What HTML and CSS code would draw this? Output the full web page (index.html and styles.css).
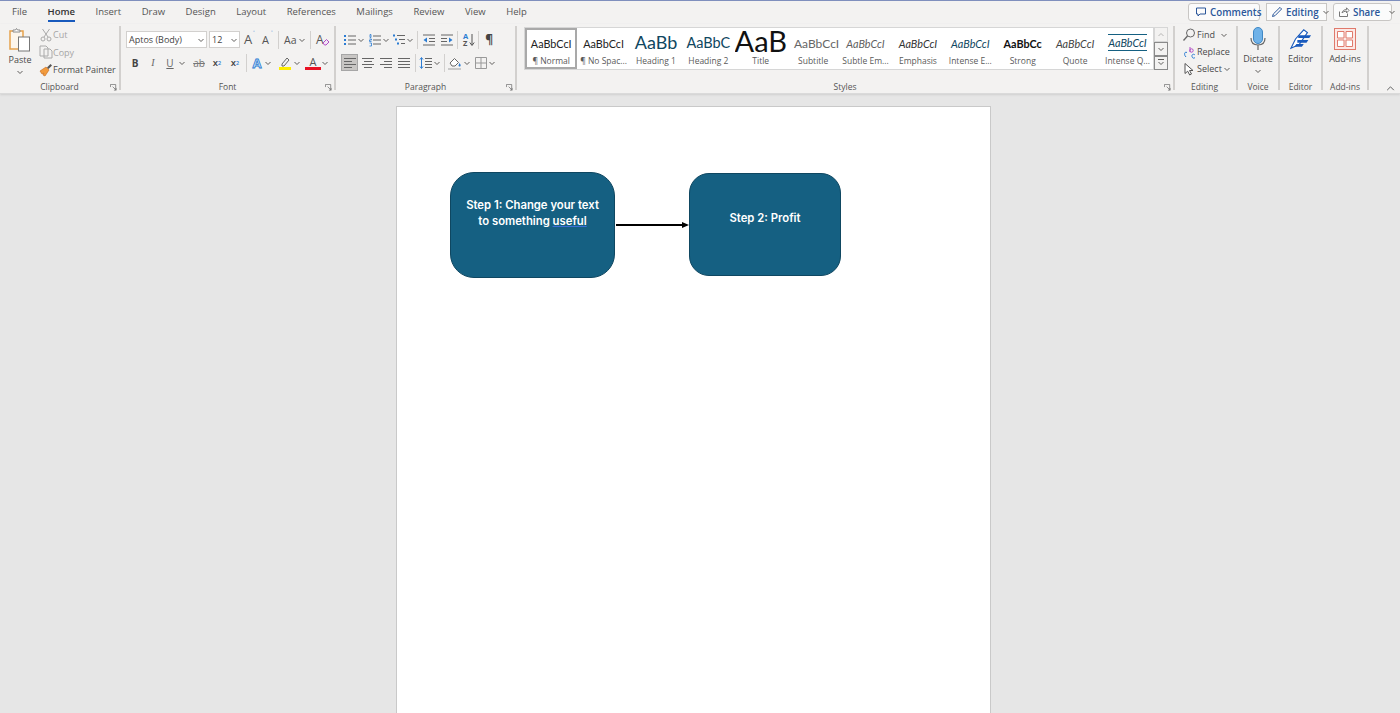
FILE: index.html
```html
<!DOCTYPE html>
<html lang="en">
<head>
<meta charset="utf-8">
<title>Document - Word</title>
<link rel="stylesheet" href="styles.css">
</head>
<body>
<svg class="defs" aria-hidden="true">
  <symbol id="ch" viewBox="0 0 8 8"><path d="M1.5 3 4 5.5 6.5 3" fill="none" stroke="#605e5c" stroke-width="1"/></symbol>
  <symbol id="launch" viewBox="0 0 8 8"><path d="M.5 .5h6v6M.5 .5v3M.5 .5M3 3l4 4M7 4.5V7H4.5" fill="none" stroke="#777" stroke-width=".9"/></symbol>
</svg>
<div class="app">
  <header class="tabbar">
    <nav class="tabs">
      <span class="tab">File</span>
      <span class="tab active">Home</span>
      <span class="tab">Insert</span>
      <span class="tab">Draw</span>
      <span class="tab">Design</span>
      <span class="tab">Layout</span>
      <span class="tab">References</span>
      <span class="tab">Mailings</span>
      <span class="tab">Review</span>
      <span class="tab">View</span>
      <span class="tab">Help</span>
    </nav>
    <div class="actions">
      <span class="act w-comments"><svg class="i12" viewBox="0 0 12 12"><path d="M1.5 2h9v6H5L3 10V8H1.5z" fill="none" stroke="#2b579a"/></svg>Comments</span>
      <span class="act w-editing"><svg class="i12" viewBox="0 0 12 12"><path d="M1.5 10.5 2.3 8 9 1.4l1.6 1.6L4 9.7z" fill="none" stroke="#2b579a"/></svg>Editing<svg class="chev" viewBox="0 0 8 8"><use href="#ch"/></svg></span>
      <span class="act w-share"><svg class="i12" viewBox="0 0 12 12"><path d="M1.5 5.5v5h8v-3M4 7c.4-2.2 2-3.4 4.5-3.4V1.8L11 4.4 8.5 7V5.2C6.500 5.200 5 5.800 4 7z" fill="none" stroke="#777"/></svg>Share<svg class="chev gap-share" viewBox="0 0 8 8"><use href="#ch"/></svg></span>
    </div>
  </header>

  <section class="ribbon">
    <div class="group g-clip">
      <div class="gbody clip-body">
        <div class="big paste">
          <svg class="i-paste" viewBox="0 0 22 24">
            <rect x="1" y="3" width="13" height="18" fill="#fdf6ec" stroke="#e6a24c" stroke-width="1.500"/>
            <path d="M4 4V2h2.500l1-1.500 1 1.500H11v2z" fill="#fff" stroke="#8a8a8a"/>
            <rect x="9.500" y="9" width="11" height="14" fill="#fff" stroke="#777"/>
          </svg>
          <span>Paste</span>
          <svg class="chev" viewBox="0 0 8 8"><use href="#ch"/></svg>
        </div>
        <div class="clip-list">
          <div class="clip-row off"><svg class="i14" viewBox="0 0 14 14"><path d="M3.500 1 9 9M10.500 1 5 9" fill="none" stroke="#aaa"/><circle cx="4" cy="11" r="2" fill="none" stroke="#aaa"/><circle cx="10" cy="11" r="2" fill="none" stroke="#aaa"/></svg>Cut</div>
          <div class="clip-row off"><svg class="i14" viewBox="0 0 14 14"><path d="M1 1h6l2 2v8H1zM5 4h6l2 2v7H5z" fill="#f3f2f1" stroke="#aaa"/></svg>Copy</div>
          <div class="clip-row"><svg class="i14" viewBox="0 0 14 14"><path d="M1 8 7 4l3 3-4 6-2-1 1-2-2 1z" fill="#f29b3d" stroke="#c4661a" stroke-width=".6"/><path d="M8 4.500 11.500 1 13 2.500 9.500 6z" fill="#555"/></svg>Format Painter</div>
        </div>
      </div>
      <div class="glabel">Clipboard</div>
      <svg class="launcher" viewBox="0 0 8 8"><use href="#launch"/></svg>
    </div>

    <div class="group g-font">
      <div class="gbody rows">
        <div class="row">
          <span class="combo w-face">Aptos (Body)<svg class="chev" viewBox="0 0 8 8"><use href="#ch"/></svg></span>
          <span class="combo w-size">12<svg class="chev" viewBox="0 0 8 8"><use href="#ch"/></svg></span>
          <span class="glyph grow-a">A<sup class="up">&#708;</sup></span>
          <span class="glyph shrink-a">A<sup class="down">&#709;</sup></span>
          <i class="vsep s-a"></i>
          <span class="glyph case-a">Aa</span><svg class="chev" viewBox="0 0 8 8"><use href="#ch"/></svg>
          <i class="vsep s-b"></i>
          <span class="glyph clear-a">A<svg class="eraser" viewBox="0 0 8 8"><path d="M1 5 4.500 1.500 7 4 4 7H2.500z" fill="#f3e6f7" stroke="#b14fc5"/></svg></span>
        </div>
        <div class="row fmt">
          <span class="cell t-b">B</span>
          <span class="cell t-i">I</span>
          <span class="cell n16 t-u">U</span><svg class="chev" viewBox="0 0 8 8"><use href="#ch"/></svg>
          <span class="cell t-s ml4">ab</span>
          <span class="cell t-x">x<sub>2</sub></span>
          <span class="cell t-x">x<sup>2</sup></span>
          <i class="vsep ml2"></i>
          <span class="cell n16 t-fx ml2">A</span><svg class="chev nudge" viewBox="0 0 8 8"><use href="#ch"/></svg>
          <span class="cell n16 ml5"><svg class="i16" viewBox="0 0 16 16"><path d="M5 9 10 3l2 2-5 6H5z" fill="none" stroke="#666"/><rect x="2" y="12" width="12" height="3" fill="#ffee00"/></svg></span><svg class="chev" viewBox="0 0 8 8"><use href="#ch"/></svg>
          <span class="cell n16 ml4 colour-a">A</span><svg class="chev" viewBox="0 0 8 8"><use href="#ch"/></svg>
        </div>
      </div>
      <div class="glabel">Font</div>
      <svg class="launcher" viewBox="0 0 8 8"><use href="#launch"/></svg>
    </div>

    <div class="group g-para">
      <div class="gbody rows">
        <div class="row para-top">
          <svg class="i14" viewBox="0 0 14 14"><path d="M5 3h8M5 7h8M5 11h8" stroke="#666"/><path d="M1 2h2v2H1zM1 6h2v2H1zM1 10h2v2H1z" fill="#2b7cd3"/></svg><svg class="chev" viewBox="0 0 8 8"><use href="#ch"/></svg>
          <svg class="i14 ml3" viewBox="0 0 14 14"><path d="M5 3h8M5 7h8M5 11h8" stroke="#666"/><path d="M2 1.500h1v3H2zM1.500 6h2v1h-2v1.500h2M1.500 10h2v3h-2" fill="none" stroke="#2b7cd3" stroke-width=".8"/></svg><svg class="chev" viewBox="0 0 8 8"><use href="#ch"/></svg>
          <svg class="i14 ml2" viewBox="0 0 14 14"><path d="M5 2.500h8M7 6.500h6M9 10.500h4" stroke="#666"/><path d="M1 1.500h2v2H1zM3 5.500h2v2H3zM5 9.500h2v2H5z" fill="#2b7cd3"/></svg><svg class="chev" viewBox="0 0 8 8"><use href="#ch"/></svg>
          <i class="vsep ml3"></i>
          <svg class="i14 ml4" viewBox="0 0 14 14"><path d="M1 2h12M7 5.500h6M7 8.500h6M1 12h12" stroke="#666"/><path d="M5 4.500v5L1.500 7z" fill="#2b7cd3"/></svg>
          <svg class="i14 ml4" viewBox="0 0 14 14"><path d="M1 2h12M1 5.500h6M1 8.500h6M1 12h12" stroke="#666"/><path d="M9 4.500v5L12.500 7z" fill="#2b7cd3"/></svg>
          <i class="vsep ml3"></i>
          <span class="sort"><span class="az"><b>A</b><b>Z</b></span><svg class="i-arrow" viewBox="0 0 6 14"><path d="M3 1v11M.8 9.500 3 12.500l2.200-3" fill="none" stroke="#555"/></svg></span>
          <i class="vsep ml3"></i>
          <span class="pilcrow">&para;</span>
        </div>
        <div class="row para-bottom">
          <span class="al on"><svg class="i14" viewBox="0 0 14 14"><path d="M1 2.500h12M1 5.500h8M1 8.500h12M1 11.500h8" stroke="#666"/></svg></span>
          <span class="al"><svg class="i14" viewBox="0 0 14 14"><path d="M1 2.500h12M3 5.500h8M1 8.500h12M3 11.500h8" stroke="#666"/></svg></span>
          <span class="al"><svg class="i14" viewBox="0 0 14 14"><path d="M1 2.500h12M5 5.500h8M1 8.500h12M5 11.500h8" stroke="#666"/></svg></span>
          <span class="al"><svg class="i14" viewBox="0 0 14 14"><path d="M1 2.500h12M1 5.500h12M1 8.500h12M1 11.500h12" stroke="#666"/></svg></span>
          <i class="vsep ml2"></i>
          <svg class="i14 ml3" viewBox="0 0 14 14"><path d="M6 2.500h7M6 5.500h7M6 8.500h7M6 11.500h7" stroke="#666"/><path d="M2.500 2v10M1 3.500 2.500 1.500 4 3.500M1 10.500l1.500 2 1.500-2" fill="none" stroke="#2b7cd3"/></svg><svg class="chev" viewBox="0 0 8 8"><use href="#ch"/></svg>
          <i class="vsep ml3"></i>
          <svg class="i14 ml3" viewBox="0 0 14 14"><path d="M2 7 6.500 2.500 10.500 6.500 7 10H4z" fill="#fff" stroke="#666"/><path d="M11.500 7c1 1.500 1.500 2 1 3s-2 .5-2-.5z" fill="#2b7cd3"/><path d="M0 13h13" stroke="#bbb" stroke-width="1.500"/></svg><svg class="chev ml1" viewBox="0 0 8 8"><use href="#ch"/></svg>
          <svg class="i14 ml3" viewBox="0 0 14 14"><path d="M1.500 1.500h11v11h-11zM7 1.500v11M1.500 7h11" fill="none" stroke="#999"/></svg><svg class="chev" viewBox="0 0 8 8"><use href="#ch"/></svg>
        </div>
      </div>
      <div class="glabel">Paragraph</div>
      <svg class="launcher" viewBox="0 0 8 8"><use href="#launch"/></svg>
    </div>

    <div class="group g-styles">
      <div class="gbody styles-body">
        <div class="gallery">
          <div class="style selected"><div class="pv p-normal">AaBbCcI</div><div class="sl">&para; Normal</div></div>
          <div class="style"><div class="pv p-normal">AaBbCcI</div><div class="sl">&para; No Spac...</div></div>
          <div class="style"><div class="pv p-h1">AaBb</div><div class="sl">Heading 1</div></div>
          <div class="style"><div class="pv p-h2">AaBbC</div><div class="sl">Heading 2</div></div>
          <div class="style"><div class="pv p-title">AaB</div><div class="sl">Title</div></div>
          <div class="style"><div class="pv p-sub">AaBbCcI</div><div class="sl">Subtitle</div></div>
          <div class="style"><div class="pv p-sem">AaBbCcI</div><div class="sl">Subtle Em...</div></div>
          <div class="style"><div class="pv p-em">AaBbCcI</div><div class="sl">Emphasis</div></div>
          <div class="style"><div class="pv p-int">AaBbCcI</div><div class="sl">Intense E...</div></div>
          <div class="style"><div class="pv p-strong">AaBbCc</div><div class="sl">Strong</div></div>
          <div class="style"><div class="pv p-quote">AaBbCcI</div><div class="sl">Quote</div></div>
          <div class="style"><div class="pv p-iq"><span>AaBbCcI</span></div><div class="sl">Intense Q...</div></div>
        </div>
        <div class="scroller">
          <span class="sb"><svg class="chev flip faint" viewBox="0 0 8 8"><use href="#ch"/></svg></span>
          <span class="sb edge"><svg class="chev" viewBox="0 0 8 8"><use href="#ch"/></svg></span>
          <span class="sb edge more"><svg class="chev" viewBox="0 0 8 8"><use href="#ch"/></svg></span>
        </div>
      </div>
      <div class="glabel">Styles</div>
      <svg class="launcher" viewBox="0 0 8 8"><use href="#launch"/></svg>
    </div>

    <div class="group g-edit">
      <div class="gbody edit-list">
        <div class="edit-row"><svg class="i14" viewBox="0 0 14 14"><circle cx="8.500" cy="5" r="4" fill="none" stroke="#666"/><path d="M5.500 8 1.500 12.500" stroke="#666" stroke-width="1.300"/></svg>Find<svg class="chev find-ch" viewBox="0 0 8 8"><use href="#ch"/></svg></div>
        <div class="edit-row"><svg class="i14" viewBox="0 0 14 14"><path d="M5 7.500C2 6 2 10.500 4 12" fill="none" stroke="#2b7cd3"/><path d="M8 2v5" stroke="#b14fc5"/><circle cx="9.500" cy="5.500" r="1.700" fill="none" stroke="#b14fc5"/><path d="M13 10c-1.500-1.500-3.500-.5-3 1.500s2 2 3 1" fill="none" stroke="#2b7cd3"/></svg>Replace</div>
        <div class="edit-row"><svg class="i14" viewBox="0 0 14 14"><path d="M3 1.500v10l2.700-2.300 2 3.800 1.800-1-2-3.500H11z" fill="#fff" stroke="#555"/></svg>Select<svg class="chev" viewBox="0 0 8 8"><use href="#ch"/></svg></div>
      </div>
      <div class="glabel">Editing</div>
    </div>

    <div class="group g-voice">
      <div class="gbody big">
        <svg class="i-big" viewBox="0 0 22 24"><rect x="6.500" y="0.500" width="9" height="16" rx="4.500" fill="#6fb2e8" stroke="#3f88c5"/><path d="M4 11c0 5 3 7 7 7s7-2 7-7M11 18v5" fill="none" stroke="#666" stroke-width="1.200"/></svg>
        <span>Dictate</span>
        <svg class="chev" viewBox="0 0 8 8"><use href="#ch"/></svg>
      </div>
      <div class="glabel">Voice</div>
    </div>

    <div class="group g-editor">
      <div class="gbody big">
        <svg class="i-big" viewBox="0 0 24 24"><path d="M1 22 6 12 15 2l4 3-9 13z" fill="#fff" stroke="#185abd" stroke-width="1.200"/><path d="M9 8h14l-2 3H9zM8 13h12l-2 3H8zM7 17.500h8l-2 3H5z" fill="#185abd"/></svg>
        <span>Editor</span>
      </div>
      <div class="glabel">Editor</div>
    </div>

    <div class="group g-addins">
      <div class="gbody big">
        <svg class="i-big" viewBox="0 0 22 22"><rect x=".5" y=".5" width="21" height="21" fill="#fbe9e6"/><path d="M3.500 3.500h6.500v6.500H3.500zM12 3.500h6.500v6.500H12zM3.500 12h6.500v6.500H3.500zM12 12h6.500v6.500H12z" fill="#fff" stroke="#e0796b"/><rect x=".5" y=".5" width="21" height="21" fill="none" stroke="#e0796b"/></svg>
        <span>Add-ins</span>
      </div>
      <div class="glabel">Add-ins</div>
    </div>

    <svg class="collapse" viewBox="0 0 10 6"><path d="M1 5 5 1l4 4" fill="none" stroke="#555" stroke-width="1.100"/></svg>
  </section>

  <main class="workspace">
    <article class="page">
      <div class="node node-a"><p>Step 1: Change your text to something <span class="flag">useful</span></p></div>
      <svg class="arrow" viewBox="0 0 73 10"><path d="M0 5h67" stroke="#000" stroke-width="2"/><path d="M66 2l7 3-7 3z" fill="#000"/></svg>
      <div class="node node-b"><p>Step 2: Profit</p></div>
    </article>
  </main>
</div>
</body>
</html>
```

FILE: styles.css
```css
* { box-sizing: border-box; }
html, body { margin: 0; height: 100%; overflow: hidden; }
body { font-family: "Open Sans", "Noto Sans", sans-serif; font-size: 9px; color: #4a4a4a; background: #e6e6e6; }
.defs { display: none; }
.app { height: 713px; display: flex; flex-direction: column; }
svg { display: block; flex: none; }
.chev { width: 8px; height: 8px; }
.i12 { width: 12px; height: 12px; }
.i14 { width: 14px; height: 14px; }
.i16 { width: 16px; height: 16px; }

/* tab row */
.tabbar { height: 24px; flex: none; background: #f3f2f1; border-top: 1px solid #7f8fbd; display: flex; justify-content: space-between; }
.tabs { display: flex; gap: 20.500px; padding-left: 12px; }
.tab { height: 21px; line-height: 21px; font-size: 9.500px; color: #555; }
.tab.active { color: #333; font-weight: 600; border-bottom: 2px solid #185abd; }
.actions { display: flex; gap: 6px; padding: 2px 8px 0 0; }
.act { height: 18px; display: flex; align-items: center; gap: 3px; padding-left: 4px; background: #fbfbfb; border: 1px solid #c8c6c4; border-radius: 3px; color: #2b579a; font-size: 9.800px; font-weight: 600; }
.w-comments { width: 72px; padding-left: 6px; }
.w-editing { width: 61px; border-radius: 0; }
.w-share { width: 59px; }
.gap-share { margin-left: 5px; }

/* ribbon */
.ribbon { height: 70px; flex: none; background: #f3f2f1; display: flex; padding-top: 2px; border-bottom: 1px solid #dadada; box-shadow: 0 1px 2px #cfcfcf; position: relative; }
.group { height: 64px; display: flex; flex-direction: column; border-right: 2px solid #d2d0ce; position: relative; flex: none; }
.gbody { flex: 1; min-height: 0; }
.glabel { height: 10px; margin-bottom: -2px; line-height: 10px; text-align: center; font-size: 8.500px; color: #555; }
.launcher { position: absolute; right: 2px; bottom: -1px; width: 7px; height: 7px; }
.g-clip { width: 121px; }
.g-font { width: 215px; }
.g-para { width: 181px; }
.g-styles { width: 658px; }
.g-edit { width: 63px; }
.g-voice { width: 42px; }
.g-editor { width: 43px; }
.g-addins { width: 46px; }
.collapse { position: absolute; left: 1386px; top: 62px; width: 9px; height: 5px; }

.big { display: flex; flex-direction: column; align-items: center; padding-top: 1px; }
.big span { line-height: 11px; margin-top: 2px; }
.big .chev { margin-top: 3px; }
.i-big { width: 22px; height: 24px; }
.g-addins .i-big { height: 22px; margin: 1px 0; }

.clip-body { display: flex; }
.paste { width: 40px; padding-top: 2px; }
.i-paste { width: 22px; height: 24px; }
.clip-list { padding-top: 0; }
.clip-row { height: 17.500px; display: flex; align-items: center; gap: 0; white-space: nowrap; margin-left: -1px; }
.clip-row .i14 { margin-right: 0; }
.clip-row.off { color: #a6a6a6; }

.rows { padding-top: 5px; display: flex; flex-direction: column; gap: 6px; }
.row { height: 17px; display: flex; align-items: center; }
.g-font .row { padding-left: 5px; }
.combo { height: 17px; display: flex; align-items: center; justify-content: space-between; padding: 0 1px 0 2px; background: #fff; border: 1px solid #d2d0ce; font-size: 9px; color: #444; }
.w-face { width: 81px; }
.w-size { width: 31px; margin-left: 2px; }
.vsep { display: block; flex: none; width: 1px; height: 18px; background: #d2d0ce; }
.glyph { position: relative; color: #555; }
.grow-a { width: 12px; margin-left: 4px; font-size: 13px; line-height: 17px; }
.shrink-a { width: 12px; margin-left: 6px; font-size: 11px; line-height: 17px; }
.glyph sup { position: absolute; left: 9px; top: -2px; font-size: 6px; line-height: 8px; color: #2b7cd3; }
.s-a { margin-left: 4px; }
.case-a { margin-left: 5px; margin-right: 1px; width: 13px; font-size: 10.500px; }
.s-b { margin-left: 4px; }
.clear-a { margin-left: 5px; width: 14px; font-size: 12px; line-height: 17px; }
.eraser { position: absolute; right: 0; bottom: 2px; width: 8px; height: 8px; }

.cell { width: 18px; flex: none; height: 17px; display: flex; align-items: center; justify-content: center; color: #444; font-size: 10px; }
.n16 { width: 16px; }
.ml1 { margin-left: 1px; }
.ml2 { margin-left: 2px; }
.ml3 { margin-left: 3px; }
.ml4 { margin-left: 4px; }
.ml5 { margin-left: 5px; }
.nudge { margin-left: -1px; }
.t-b { font-weight: 700; }
.t-i { font-style: italic; font-family: "Liberation Serif", serif; color: #666; }
.t-u { text-decoration: underline; color: #666; }
.t-s { text-decoration: line-through; color: #777; }
.t-x { font-weight: 600; font-size: 9.500px; }
.t-x sub, .t-x sup { font-size: 5.500px; line-height: 0; color: #2b7cd3; }
.t-fx { font-size: 13px; font-weight: 700; color: #cfe3f7; -webkit-text-stroke: .8px #2b7cd3; }
.colour-a { font-size: 11px; color: #555; border-bottom: 3px solid #e81123; height: 14px; line-height: 12px; align-items: flex-start; margin-top: 1px; }

.para-top { padding-left: 7px; }
.para-bottom { padding-left: 5px; }
.sort { display: flex; align-items: center; margin-left: 5px; }
.az { display: flex; flex-direction: column; font-size: 7.500px; line-height: 7px; }
.az b { font-weight: 700; color: #2b7cd3; }
.az b + b { color: #555; }
.i-arrow { width: 6px; height: 14px; margin-left: 1px; }
.pilcrow { margin-left: 6px; font-size: 12px; font-weight: 700; color: #444; }
.al { width: 17px; height: 17px; margin-right: 1px; display: flex; align-items: center; justify-content: center; }
.al.on { background: #c8c6c4; border: 1px solid #a6a6a6; }

.styles-body { display: flex; padding: 1px 0 0 7px; }
.gallery { width: 630px; height: 43px; display: flex; background: #fff; border: 1px solid #d6d6d6; }
.style { width: 52.400px; height: 41px; flex: none; padding-top: 2px; overflow: hidden; text-align: center; }
.style.selected { border: 2px solid #a9a9a9; padding-top: 0; }
.pv { height: 24px; line-height: 27px; font-size: 10.800px; white-space: nowrap; overflow: hidden; color: #222; font-family: "Lato", "Noto Sans", sans-serif; }
.sl { height: 13px; line-height: 13px; font-size: 8.500px; color: #5a5a5a; white-space: nowrap; }
.p-h1 { font-size: 18px; line-height: 25px; color: #0f4761; }
.p-h2 { font-size: 14.500px; line-height: 26px; color: #0f4761; }
.p-title { font-size: 29px; line-height: 21px; color: #111; }
.p-sub { font-size: 12px; color: #666; padding-left: 7px; text-align: left; }
.p-sem { font-style: italic; color: #5f5f5f; }
.p-em { font-style: italic; color: #333; }
.p-int { font-style: italic; color: #0f4761; }
.p-strong { font-weight: 700; color: #111; }
.p-quote { font-style: italic; color: #444; }
.p-iq { font-style: italic; color: #0f4761; padding-top: 4px; line-height: 14px; }
.p-iq span { display: inline-block; border-top: 1px solid #156082; border-bottom: 1px solid #156082; line-height: 15px; }
.scroller { width: 14px; margin-left: 0; display: flex; flex-direction: column; }
.sb { height: 15px; display: flex; align-items: center; justify-content: center; border: 1px solid #d6d6d6; }
.sb.edge { border-color: #8a8a8a; height: 14px; }
.sb.more { border-top: 1px solid #8a8a8a; position: relative; }
.sb.more::before { content: ""; position: absolute; left: 3px; right: 3px; top: 2px; border-top: 1px solid #605e5c; }
.flip { transform: rotate(180deg); }
.faint { opacity: .4; }

.edit-list { padding: 0 0 0 7px; }
.edit-row { height: 17px; display: flex; align-items: center; gap: 1px; white-space: nowrap; }
.find-ch { margin-left: 4px; }
.g-edit .glabel { padding-right: 2px; }

/* document */
.workspace { flex: 1; min-height: 0; display: flex; justify-content: center; padding: 12px 13px 0 0; overflow: hidden; }
.page { width: 595px; height: 900px; flex: none; background: #fff; border: 1px solid #c9c9c9; position: relative; }
.node { position: absolute; display: flex; align-items: center; justify-content: center; background: #156082; border: 1px solid #0f4761; color: #fff; font-family: "Inter", "Noto Sans", sans-serif; font-size: 11.300px; font-weight: 600; line-height: 16px; text-align: center; }
.node p { margin: 0; }
.node-a { left: 53px; top: 65px; width: 165px; height: 106px; border-radius: 24px; padding: 0 14px 24px; }
.node-b { left: 292px; top: 66px; width: 152px; height: 103px; border-radius: 20px; padding-bottom: 13px; }
.flag { text-decoration: underline; text-decoration-color: #3a6fd8; }
.arrow { position: absolute; left: 219px; top: 113px; width: 73px; height: 10px; }
```
